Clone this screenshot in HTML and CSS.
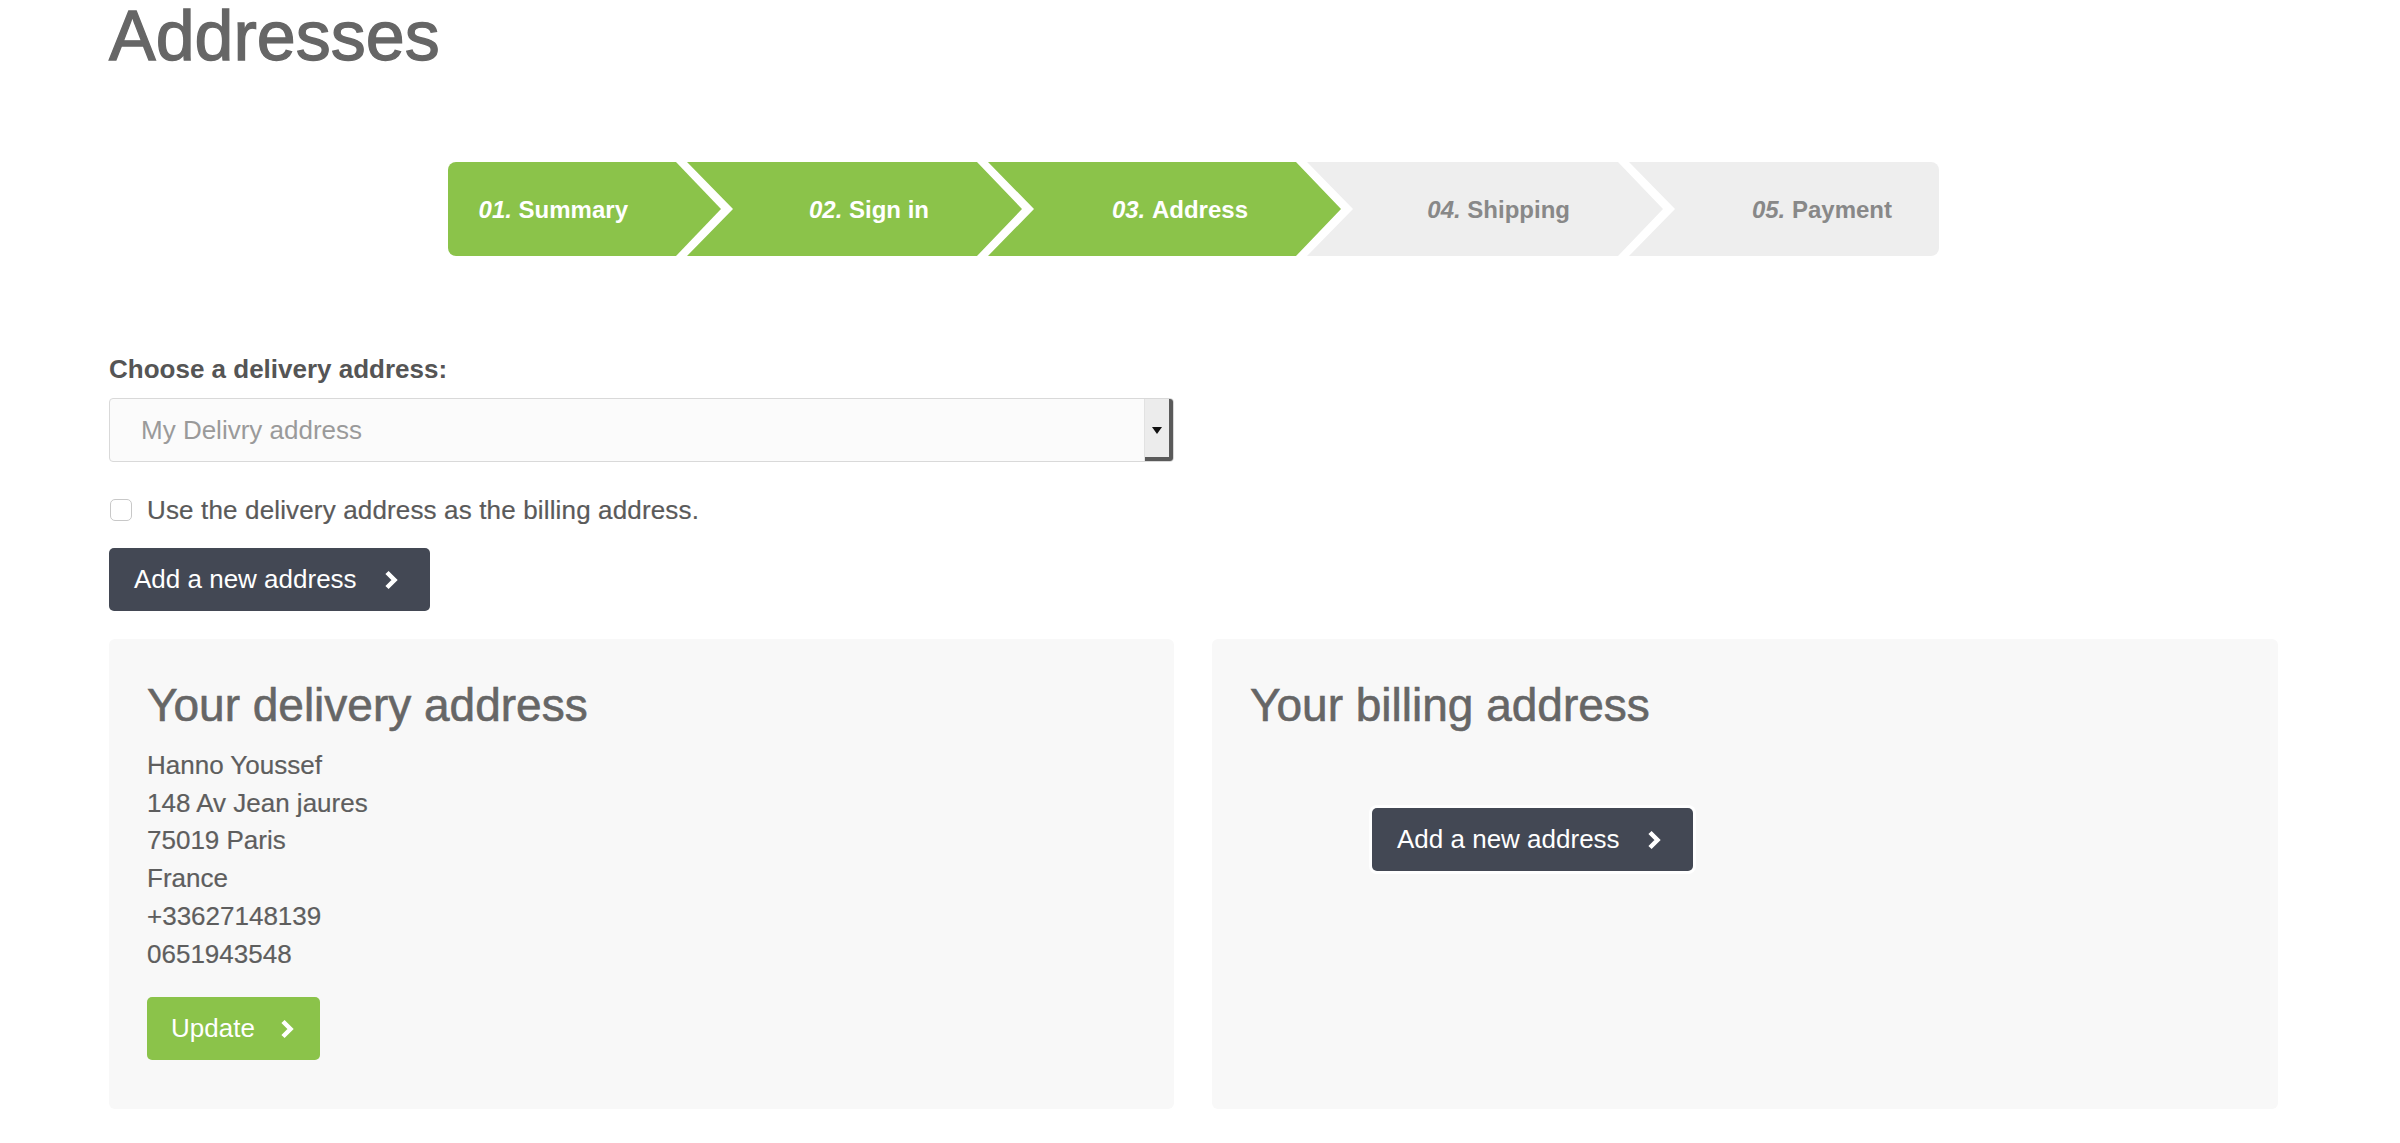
FILE: index.html
```html
<!DOCTYPE html>
<html lang="en">
<head>
<meta charset="utf-8">
<title>Addresses</title>
<link rel="stylesheet" href="styles.css">
</head>
<body>
<div class="page">
  <h1 class="page-title">Addresses</h1>

  <ol class="steps">
    <li class="step step-done step-first step-1"><span><em>01.</em>&nbsp;Summary</span></li>
    <li class="step step-done step-2"><span><em>02.</em>&nbsp;Sign in</span></li>
    <li class="step step-done step-3"><span><em>03.</em>&nbsp;Address</span></li>
    <li class="step step-todo step-4"><span><em>04.</em>&nbsp;Shipping</span></li>
    <li class="step step-todo step-last step-5"><span><em>05.</em>&nbsp;Payment</span></li>
  </ol>

  <div class="choose">
    <label class="choose-label" for="addr">Choose a delivery address:</label>
    <div class="select-box">
      <select id="addr" class="select-input">
        <option>My Delivry address</option>
      </select>
      <span class="select-arrow"><span class="caret"></span></span>
    </div>
    <label class="check-row">
      <input type="checkbox" class="check">
      <span>Use the delivery address as the billing address.</span>
    </label>
    <a class="btn btn-dark" href="#">Add a new address
      <svg class="chev" viewBox="0 0 14 20" width="14" height="20"><polyline points="3,2.5 10.5,10 3,17.5" fill="none" stroke="#fff" stroke-width="4.5"/></svg>
    </a>
  </div>

  <div class="cards">
    <section class="card">
      <h3 class="card-title">Your delivery address</h3>
      <ul class="addr-lines">
        <li>Hanno Youssef</li>
        <li>148 Av Jean jaures</li>
        <li>75019 Paris</li>
        <li>France</li>
        <li>+33627148139</li>
        <li>0651943548</li>
      </ul>
      <a class="btn btn-green" href="#">Update
        <svg class="chev" viewBox="0 0 14 20" width="14" height="20"><polyline points="3,2.5 10.5,10 3,17.5" fill="none" stroke="#fff" stroke-width="4.5"/></svg>
      </a>
    </section>
    <section class="card">
      <h3 class="card-title">Your billing address</h3>
      <div class="billing-action">
        <a class="btn btn-dark btn-framed" href="#">Add a new address
          <svg class="chev" viewBox="0 0 14 20" width="14" height="20"><polyline points="3,2.5 10.5,10 3,17.5" fill="none" stroke="#fff" stroke-width="4.5"/></svg>
        </a>
      </div>
    </section>
  </div>
</div>
</body>
</html>
```
FILE: styles.css
```css
* { box-sizing: border-box; }

html, body {
  margin: 0;
  padding: 0;
  background: #ffffff;
}

body {
  font-family: "Liberation Sans", Arial, Helvetica, sans-serif;
  font-size: 26px;
  color: #666666;
}

.page {
  width: 2169px;
  margin-left: 109px;
  padding-top: 1px;
}

.page-title {
  margin: 0;
  font-size: 70px;
  line-height: 70px;
  height: 69px;
  font-weight: normal;
  color: #666666;
  -webkit-text-stroke: 1.3px #666666;
}

/* ---------- steps ---------- */
.steps {
  list-style: none;
  margin: 92px 0 0 339px;
  padding: 0;
  display: flex;
  height: 94px;
}

.step {
  height: 94px;
  margin-left: -34px;
  display: flex;
  align-items: center;
  justify-content: flex-end;
  padding-right: 93px;
  padding-top: 2px;
  font-size: 24px;
  font-weight: bold;
  clip-path: polygon(0 0, calc(100% - 45px) 0, 100% 50%, calc(100% - 45px) 100%, 0 100%, 46px 50%);
}

.step em {
  font-style: italic;
}

.step-first {
  margin-left: 0;
  border-radius: 8px 0 0 8px;
  clip-path: polygon(0 0, calc(100% - 45px) 0, 100% 50%, calc(100% - 45px) 100%, 0 100%);
}

.step-last {
  padding-right: 47px;
  border-radius: 0 8px 8px 0;
  clip-path: polygon(0 0, 100% 0, 100% 100%, 0 100%, 46px 50%);
}

.step-done {
  background: #8bc34a;
  color: #ffffff;
}

.step-todo {
  background: #eeeeee;
  color: #888888;
}

.step-1 { width: 273px; }
.step-2 { width: 335px; }
.step-3 { width: 353px; }
.step-4 { width: 356px; }
.step-5 { width: 310px; }

/* ---------- choose address ---------- */
.choose {
  width: 1065px;
  margin-top: 95px;
  display: flex;
  flex-direction: column;
  align-items: flex-start;
}

.choose-label {
  display: block;
  font-weight: bold;
  font-size: 26px;
  line-height: 36px;
  color: #555555;
}

.select-box {
  margin-top: 11px;
  width: 1065px;
  height: 64px;
  display: flex;
  border: 1px solid #d9d9d9;
  border-radius: 4px;
  background: #fbfbfb;
  overflow: hidden;
}

.select-input {
  flex: 1;
  appearance: none;
  -webkit-appearance: none;
  border: 0;
  background: transparent;
  font-family: inherit;
  font-size: 26px;
  color: #9a9a9a;
  padding: 0 0 0 31px;
  outline: none;
}

.select-arrow {
  width: 29px;
  background: #ececec;
  border-left: 1px solid #e2e2e2;
  box-shadow: inset -4px -4px 0 #5a5a5a;
  display: flex;
  align-items: center;
  justify-content: center;
  padding-right: 4px;
}

.caret {
  width: 0;
  height: 0;
  border-left: 5px solid transparent;
  border-right: 5px solid transparent;
  border-top: 7px solid #111111;
}

.check-row {
  margin-top: 30px;
  display: flex;
  align-items: center;
  height: 36px;
  font-size: 26px;
  color: #5a5a5a;
  letter-spacing: 0.15px;
  -webkit-text-stroke: 0.2px #5a5a5a;
}

.check {
  appearance: none;
  -webkit-appearance: none;
  width: 22px;
  height: 22px;
  margin: 0 15px 0 1px;
  border: 1px solid #c8c8c8;
  border-radius: 5px;
  background: #ffffff;
}

/* ---------- buttons ---------- */
.btn {
  display: inline-flex;
  align-items: center;
  height: 63px;
  padding: 0 26px 0 25px;
  border-radius: 5px;
  font-size: 26px;
  color: #ffffff;
  text-decoration: none;
  white-space: nowrap;
}

.btn .chev {
  margin-left: 27px;
}

.btn-dark {
  background: #434854;
}

.choose .btn-dark {
  margin-top: 20px;
  width: 321px;
}

.btn-green {
  background: #8bc34a;
  margin-top: 26px;
  width: 173px;
  padding-left: 24px;
}

.btn-green .chev {
  margin-left: 25px;
}

.btn-framed {
  width: 321px;
  box-shadow: 0 0 0 3px #ffffff;
}

/* ---------- cards ---------- */
.cards {
  margin-top: 28px;
  display: grid;
  grid-template-columns: 1065px 1066px;
  column-gap: 38px;
}

.card {
  background: #f8f8f8;
  border-radius: 6px;
  height: 470px;
  padding: 41px 38px 0 38px;
}

.card-title {
  margin: 0;
  font-size: 46px;
  line-height: 50px;
  font-weight: normal;
  color: #666666;
  -webkit-text-stroke: 0.6px #666666;
}

.addr-lines {
  list-style: none;
  margin: 17px 0 0 0;
  padding: 0;
  line-height: 37.7px;
  font-size: 26px;
  color: #5e5e5e;
  -webkit-text-stroke: 0.2px #5e5e5e;
}

.addr-lines + .btn-green {
  margin-top: 24px;
}

.billing-action {
  margin-top: 78px;
  padding-left: 122px;
}
```
